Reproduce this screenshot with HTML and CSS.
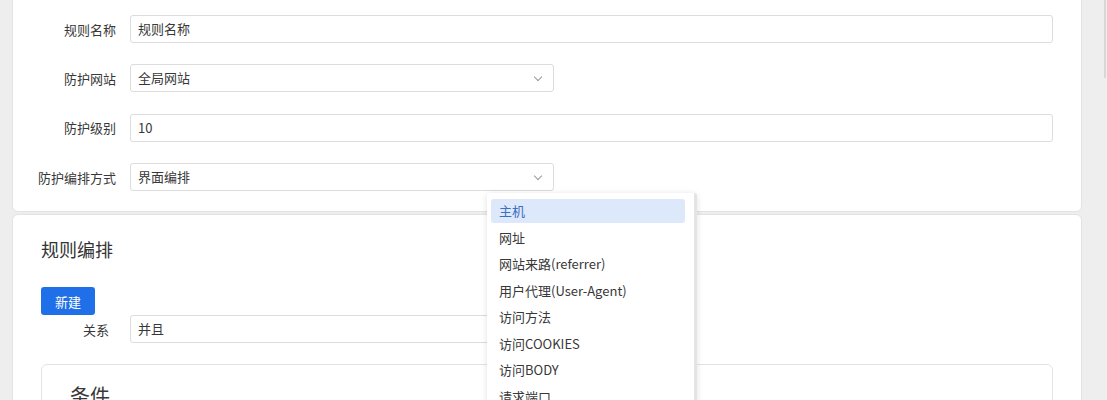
FILE: index.html
```html
<!DOCTYPE html>
<html lang="zh-CN">
<head>
  <meta charset="UTF-8" />
  <title>规则编辑</title>
  <link rel="stylesheet" href="styles.css">
</head>
<body>
  <div class="page">
    <div class="card card-basic">
      <div class="form-row">
        <label class="form-label">规则名称</label>
        <div class="input wide">规则名称</div>
      </div>
      <div class="form-row">
        <label class="form-label">防护网站</label>
        <div class="input select">全局网站<span class="arrow"></span></div>
      </div>
      <div class="form-row">
        <label class="form-label">防护级别</label>
        <div class="input wide">10</div>
      </div>
      <div class="form-row last">
        <label class="form-label">防护编排方式</label>
        <div class="input select">界面编排<span class="arrow"></span></div>
      </div>
    </div>

    <div class="card card-rules">
      <h2 class="card-title">规则编排</h2>
      <button class="btn-primary">新建</button>
      <div class="form-row rel-row">
        <label class="form-label narrow">关系</label>
        <div class="input select">并且<span class="arrow"></span></div>
      </div>
      <div class="sub-card">
        <h3 class="sub-title">条件</h3>
      </div>
    </div>

    <ul class="dropdown">
      <li class="active">主机</li>
      <li>网址</li>
      <li>网站来路(referrer)</li>
      <li>用户代理(User-Agent)</li>
      <li>访问方法</li>
      <li>访问COOKIES</li>
      <li>访问BODY</li>
      <li>请求端口</li>
    </ul>
  </div>
  <div class="scroll-thumb"></div>
</body>
</html>
```

FILE: styles.css
```css
body {
  margin: 0;
  background-color: #eeeeee;
  font-family: "Noto Sans CJK SC", "Noto Sans", sans-serif;
  font-size: 13px;
  color: #383838;
  overflow: hidden;
  height: 400px;
}
.page {
  position: relative;
  margin: -12px 25px 0 12px;
}
.card {
  background: #fff;
  border: 1px solid #e3e3e3;
  border-radius: 6px;
  box-sizing: border-box;
}
.card-basic {
  padding: 26px 28px 20px 0;
}
.form-row {
  display: flex;
  align-items: center;
  margin-bottom: 21.4px;
}
.form-row.last {
  margin-bottom: 0;
}
.form-label {
  width: 103px;
  text-align: right;
  padding-right: 14px;
  flex-shrink: 0;
}
.form-label.narrow {
  width: 96px;
  padding-right: 21px;
}
.input {
  height: 28px;
  box-sizing: border-box;
  border: 1px solid #dcdcdc;
  border-radius: 3px;
  padding: 0 7px;
  line-height: 26px;
  background: #fff;
  position: relative;
}
.input.wide {
  flex: 1;
}
.input.select {
  width: 424px;
}
.arrow {
  position: absolute;
  right: 12px;
  top: 9px;
  width: 5px;
  height: 5px;
  border-right: 1px solid #999;
  border-bottom: 1px solid #999;
  transform: rotate(45deg);
}
.card-rules {
  margin-top: 2px;
  padding: 22px 28px 40px 28px;
  height: 220px;
}
.card-title {
  margin: 0;
  font-size: 18px;
  font-weight: normal;
  line-height: 25px;
  color: #333;
}
.btn-primary {
  display: block;
  margin-top: 25px;
  width: 54px;
  height: 28px;
  background: #1f6fe8;
  color: #fff;
  border: none;
  border-radius: 3px;
  font-family: inherit;
  font-size: 13px;
  padding: 0;
}
.rel-row {
  margin-left: -28px;
  margin-bottom: 21px;
}
.sub-card {
  border: 1px solid #e3e3e3;
  border-radius: 6px;
  padding: 16px 28px;
  height: 80px;
}
.sub-title {
  margin: 0;
  font-size: 20px;
  font-weight: normal;
  line-height: 30px;
}
.dropdown {
  position: absolute;
  left: 475px;
  top: 205px;
  width: 210px;
  height: 230px;
  margin: 0;
  padding: 6px 9px 0 4px;
  box-sizing: border-box;
  list-style: none;
  background: #fff;
  box-shadow: 0 1px 6px rgba(0, 0, 0, 0.12);
  border-radius: 3px;
  border-right: 3px solid #e4e4e4;
}
.dropdown li {
  height: 24px;
  line-height: 24px;
  margin-bottom: 2.5px;
  padding-left: 8px;
  border-radius: 3px;
  white-space: nowrap;
}
.dropdown li.active {
  background: #dde8fb;
  color: #3b6fc2;
}
.scroll-thumb {
  position: absolute;
  right: 1px;
  top: 0;
  width: 2px;
  height: 78px;
  background: #d8d8d8;
}
```
